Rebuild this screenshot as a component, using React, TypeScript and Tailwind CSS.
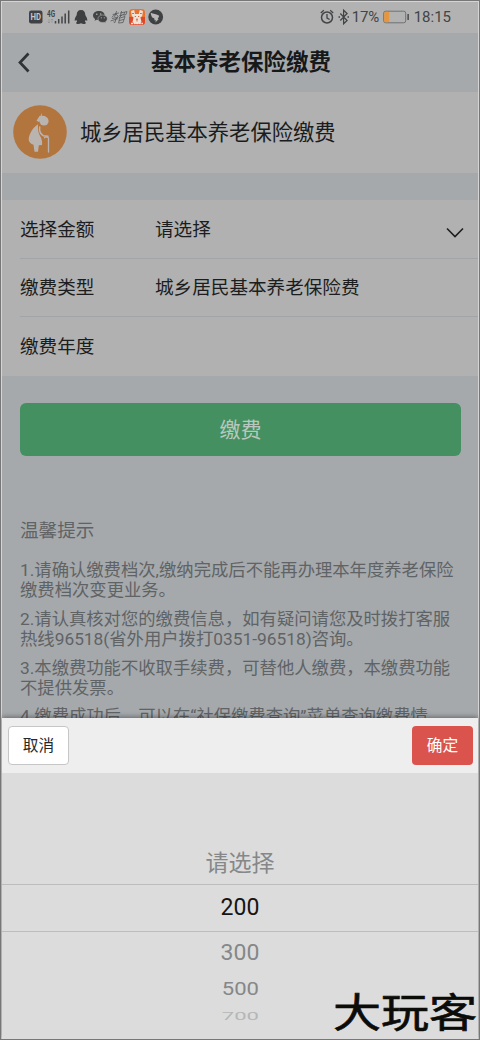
import type { ReactNode } from 'react';

const cjk = "font-['Roboto','Noto_Sans_CJK_SC',sans-serif]";

function StatusBar() {
  return (
    <div className="flex h-[31px] shrink-0 items-center bg-[#b2b2b2] pb-[2px] pl-[27px] pr-[27px] text-[#424446]">
      <svg width="136" height="20" viewBox="0 0 136 20" className="shrink-0">
        <rect x="0" y="3.500" width="13.500" height="13" rx="2.200" fill="#3f4143" />
        <text x="6.700" y="13.400" textAnchor="middle" fontSize="9.500" fontWeight="700" fontFamily="Roboto" textLength="10.500" lengthAdjust="spacingAndGlyphs" fill="#c6c6c6">HD</text>
        <text x="18" y="9.700" fontSize="8.500" fontWeight="700" fontFamily="Roboto" textLength="8" lengthAdjust="spacingAndGlyphs" fill="#424446">4G</text>
        <path d="M20 12v4m-1.200-1.200L20 16l1.200-1.200M23 16v-4m-1.200 1.200L23 12l1.200 1.200" stroke="#8d8f91" strokeWidth=".7" fill="none" />
        <path d="M26.500 14v2.500M29.700 12v4.500M33 9.500v7M36.200 6.500v10M39.700 3.500v13" stroke="#424446" strokeWidth="1.500" />
        <path d="M52 3c-3 0-4.300 2-4.300 5-.8 1.500-2.200 3.500-2 5.600.4.6 1-.1 1.500-.8l.9 2c-1 .4-1.400 1.500-.4 1.900 1 .4 3.100.3 4.300-.4 1.200.7 3.300.8 4.300.4 1-.4.6-1.500-.4-1.900l.9-2c.5.700 1.100 1.400 1.500.800.2-2.100-1.200-4.100-2-5.600 0-3-1.300-5-4.300-5z" fill="#3d3f41" />
        <path d="M70 4c-3.500 0-6 2-6 4.600 0 1.500.8 2.700 2.100 3.500l-.5 1.600 2-.9c.7.200 1.600.300 2.500.300 3.300 0 5.600-2 5.600-4.500S73.500 4 70 4z" fill="#424446" />
        <path d="M73.600 8c-2.700 0-4.600 1.600-4.600 3.800s1.900 3.700 4.600 3.700c.6 0 1.200-.1 1.700-.2l1.700.8-.4-1.400c1.100-.7 1.700-1.700 1.700-2.900 0-2.200-2-3.800-4.700-3.800z" fill="#424446" stroke="#b2b2b2" strokeWidth=".6" />
        <g fill="#b2b2b2"><circle cx="67.800" cy="7.300" r=".8" /><circle cx="71.700" cy="7" r=".8" /><circle cx="72.300" cy="10.800" r=".6" /><circle cx="75.300" cy="10.800" r=".6" /></g>
        <g stroke="#55575a" strokeWidth=".8" fill="none" strokeLinecap="round">
          <path d="M84 7.500l5.500-1.500M87.500 4.500l-1.800 5M86.500 7l-3.500 3.200M87 7l2.200 2.500M83.500 11.500l5.500-1.500-2 2M82 13.800l6.500-2M87 11.500l-1 4-1.200-.5" />
          <path d="M91.500 6l3.500-.8M92.500 4.500l-1 4M90.500 8.800l4-1.200M93 8l-3 3M96 5l2-.4-1 3-1.800.5zM91 11l5-1.500-2 6-4 .5zM90.500 13.500l4-1" />
        </g>
        <rect x="100" y="2" width="16" height="16" rx="3.500" fill="#e8732f" />
        <path d="M100 10h16v4.500a3.500 3.500 0 0 1-3.500 3.500h-9a3.500 3.500 0 0 1-3.500-3.500z" fill="#dc4a2c" />
        <path d="M102 4l3.200-1 .8 4h3.800l1-4 3.200 1-.8 5-1.800 1.500 1.100 4.500-2 1.700h-5l-2-1.700 1.100-4.500-1.800-1.500z" fill="#efe3d8" />
        <path d="M103.300 6.500h1.500M111.200 6.500h1.500M105.800 9.500h1M109.200 9.500h1" stroke="#c9502c" strokeWidth="1.100" />
        <path d="M107 12.200h2M108 12.200v2.300" stroke="#d4603a" strokeWidth=".9" />
        <path d="M102 16.500h12" stroke="#f3e7dc" strokeWidth="1.300" strokeDasharray="2 .6" />
        <circle cx="126.700" cy="10" r="7.400" fill="#3f4143" />
        <path d="M121.700 5.800c2.500.9 6 1.700 8.500 3-.2 1-.8 2.200-1.500 3.200h1l-3.300 3.600.5-2.400h-1.500c.2-.9.1-1.500-.3-1.900-1.200-.3-1.900-.8-2.300-1.600-.7-1.300-1-2.500-1.100-3.900z" fill="#b8b8b8" />
      </svg>
      <div className="grow" />
      <div className="flex items-center">
        <svg width="30" height="18" viewBox="0 0 30 18" fill="none" stroke="#424446">
          <circle cx="8" cy="9.500" r="5.500" strokeWidth="1.500" />
          <path d="M8 6v4l2.600 1.500M1.800 5l3-2.700M14.200 5l-3-2.700" strokeWidth="1.300" />
          <path d="M21.300 5.500l6.800 7-3.500 3.300V2.200l3.500 3.300-6.800 7" strokeWidth="1.250" />
          <path d="M19.500 9h1.500M28.500 9h1.500" strokeWidth="1.500" />
        </svg>
        <span className="ml-[3px] w-[27px] text-[15px] leading-[20px] tracking-[-.1px]">17%</span>
        <svg width="27" height="14" viewBox="0 0 27 14" className="ml-[4px]">
          <rect x=".7" y="1.200" width="22" height="11.600" rx="2" fill="none" stroke="#6f7173" strokeWidth="1" />
          <rect x="1.200" y="1.800" width="5" height="10.400" rx="1.500" fill="#e7963f" />
          <rect x="24.300" y="4" width="1.700" height="6" fill="#55575a" />
        </svg>
        <span className="ml-[4px] text-[15px] leading-[20px]">18:15</span>
      </div>
    </div>
  );
}

function ElderIcon() {
  return (
    <svg width="54" height="54" viewBox="0 0 54 54" className="shrink-0">
      <circle cx="27" cy="27" r="26.800" fill="#b3753e" />
      <g fill="#b9b4b0">
        <circle cx="31" cy="16" r="4.600" />
        <path d="M23.500 15.800l3-4.800 1.300-.2.400-3 .8 3 3 .2 1.500 2.500-5.500 1-2 2.600z" />
        <path d="M25 19.200c-4.700 3-8.500 8.700-9.300 14.400-.3 3 1.300 5.100 4.800 6.200l1 7h3.500l.8-6.500 3.200-.2c.5-3.200-.2-6.700-2.200-9.700-1.500-2.700-2-5.800-1.800-11.200z" />
      </g>
      <path d="M26.700 22c-.6 4 1 7.200 3.800 8.800l4.500.4" fill="none" stroke="#b9b4b0" strokeWidth="1.500" strokeLinecap="round" />
      <path d="M31.500 32.800c.4-1.200 3.900-1.100 4 .4V47" fill="none" stroke="#b9b4b0" strokeWidth="1.300" strokeLinecap="round" />
    </svg>
  );
}

function Row({ label, children, last = false }: { label: string; children?: ReactNode; last?: boolean }) {
  return (
    <div className={`ml-[18px] flex items-center text-[18.600px] leading-[28px] text-[#1c1d1e] ${last ? 'h-[59px] pt-[1px]' : 'h-[58.500px] border-b border-[#a2a5a8] pt-[2px]'}`}>
      <span className="w-[135px]">{label}</span>
      <span className="grow">{children}</span>
    </div>
  );
}

const tips = [
  ['1.请确认缴费档次,缴纳完成后不能再办理本年度养老保险', '缴费档次变更业务。'],
  ['2.请认真核对您的缴费信息，如有疑问请您及时拨打客服', '热线96518(省外用户拨打0351-96518)咨询。'],
  ['3.本缴费功能不收取手续费，可替他人缴费，本缴费功能', '不提供发票。'],
  ['4.缴费成功后，可以在“社保缴费查询”菜单查询缴费情'],
];

export default function App() {
  return (
    <div className={`h-[1040px] w-[480px] overflow-hidden border border-[#777777] bg-[#a5a9ac] ${cjk}`}>
      <div className="flex h-full flex-col border border-[#d4d4d4]">
        <StatusBar />
        <header className="flex h-[59px] shrink-0 items-center pb-[1px]">
          <svg width="40" height="30" viewBox="0 0 40 30" className="shrink-0">
            <path d="M26.500 6.500L18 15.500l8.500 9" fill="none" stroke="#303234" strokeWidth="2.700" />
          </svg>
          <h1 className="ml-[-1px] grow pr-[37px] text-center text-[22.500px] font-bold leading-[30px] text-[#17181a]">基本养老保险缴费</h1>
        </header>
        <section className="flex h-[81px] shrink-0 items-center bg-[#b1b1b1] pb-[2px] pl-[11px]">
          <ElderIcon />
          <span className="ml-[13px] mt-[2px] text-[21.300px] leading-[30px] text-[#1b1c1d]">城乡居民基本养老保险缴费</span>
        </section>
        <section className="mt-[27px] h-[176px] shrink-0 bg-[#b1b1b1]">
          <Row label="选择金额">
            <span className="flex items-center justify-between pr-[14px]">
              请选择
              <svg width="18" height="12" viewBox="0 0 18 12" className="mt-[6px]">
                <path d="M1 1.500l8 8 8-8" fill="none" stroke="#1d1e20" strokeWidth="1.600" />
              </svg>
            </span>
          </Row>
          <Row label="缴费类型">城乡居民基本养老保险费</Row>
          <Row label="缴费年度" last />
        </section>
        <button className="mx-[18px] mr-[17px] mt-[27px] h-[53px] shrink-0 rounded-[6px] bg-[#459061] text-[21px] leading-[30px] text-[#b9c8bf]">缴费</button>
        <section className="h-[262px] shrink-0 overflow-hidden pl-[18px] text-[#606365]">
          <h2 className="mt-[61px] text-[18.600px] leading-[28px]">温馨提示</h2>
          <div className="mt-[15px] flex flex-col gap-[8px] whitespace-nowrap text-[17.330px] leading-[20.400px]">
            {tips.map((lines) => (
              <p key={lines[0]}>
                {lines.map((line) => <span className="block" key={line}>{line}</span>)}
              </p>
            ))}
          </div>
        </section>
        <section className="relative flex h-[321px] shrink-0 flex-col bg-[#dcdcdc] shadow-[0_-1px_5px_rgba(0,0,0,.4)]">
          <div className="flex h-[55px] shrink-0 items-center justify-between bg-[#eeeeee] pl-[6px] pr-[5px] text-[15.700px] leading-[24px]">
            <button className="h-[39px] w-[61px] rounded-[4px] border border-[#c6c6c6] bg-white text-[#282828]">取消</button>
            <button className="h-[39px] w-[61px] rounded-[4px] bg-[#da544d] text-white">确定</button>
          </div>
          <div className="flex grow flex-col items-center text-[23px] text-[#858789]">
            <div className="mt-[70px] h-[41px] leading-[41px]">请选择</div>
            <div className="h-[48px] w-full border-y border-[#bdbdbd] text-center leading-[46px] text-[#151515]">200</div>
            <div className="h-[40px] scale-y-[.94] leading-[41px]">300</div>
            <div className="h-[34px] scale-x-[.96] scale-y-[.78] leading-[36px]">500</div>
            <div className="h-[20px] scale-x-[.96] scale-y-[.48] leading-[22px] text-[#b5b6b7]">700</div>
          </div>
          <div className="absolute bottom-[-6px] right-[1px] origin-center scale-y-[.84] whitespace-nowrap text-[48px] font-normal leading-[62px] text-[#0b0b08] [-webkit-text-stroke:.8px_#0b0b08] [stroke-linejoin:round]">大玩客</div>
        </section>
      </div>
    </div>
  );
}
